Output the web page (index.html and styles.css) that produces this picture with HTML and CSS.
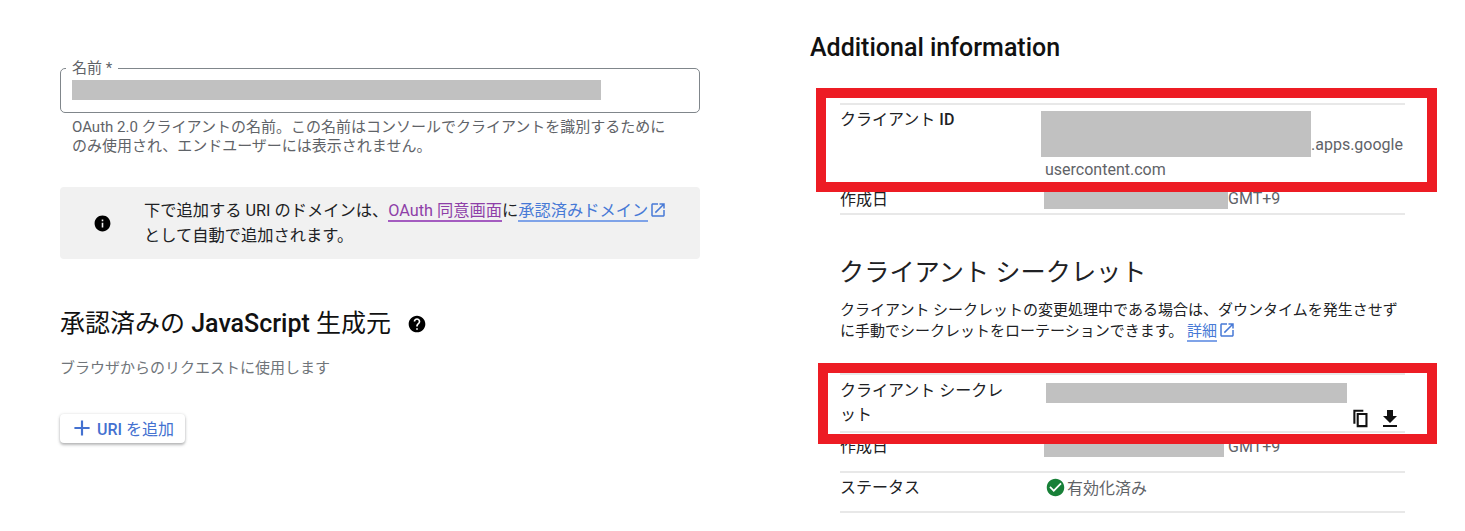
FILE: index.html
```html
<!DOCTYPE html>
<html lang="ja">
<head>
<meta charset="utf-8">
<title>OAuth クライアント</title>
<link rel="stylesheet" href="styles.css">
</head>
<body>
<main class="page">
  <section class="left">
    <div class="field">
      <span class="field-label">名前 *</span>
      <div class="redact field-value"></div>
    </div>
    <p class="helper">OAuth 2.0 クライアントの名前。この名前はコンソールでクライアントを識別するために<br>のみ使用され、エンドユーザーには表示されません。</p>
    <div class="notice">
      <svg class="notice-icon" viewBox="0 0 24 24"><path d="M12 2C6.48 2 2 6.48 2 12s4.48 10 10 10 10-4.48 10-10S17.52 2 12 2zm1 15h-2v-6h2v6zm0-8h-2V7h2v2z"/></svg>
      <p class="notice-text">下で追加する URI のドメインは、<a class="link visited">OAuth 同意画面</a>に<a class="link">承認済みドメイン</a><svg class="ext" viewBox="0 0 24 24"><path d="M19 19H5V5h7V3H5c-1.11 0-2 .9-2 2v14c0 1.1.89 2 2 2h14c1.1 0 2-.9 2-2v-7h-2v7zM14 3v2h3.59l-9.83 9.83 1.41 1.41L19 6.41V10h2V3h-7z"/></svg><br>として自動で追加されます。</p>
    </div>
    <h2 class="section-title">承認済みの <b>JavaScript</b> 生成元<svg class="help" viewBox="0 0 24 24"><path d="M12 2C6.48 2 2 6.48 2 12s4.48 10 10 10 10-4.48 10-10S17.52 2 12 2zm1 17h-2v-2h2v2zm2.07-7.75l-.9.92C13.45 12.9 13 13.5 13 15h-2v-.5c0-1.1.45-2.1 1.17-2.83l1.24-1.26c.37-.36.59-.86.59-1.41 0-1.1-.9-2-2-2s-2 .9-2 2H8c0-2.21 1.79-4 4-4s4 1.79 4 4c0 .88-.36 1.68-.93 2.25z"/></svg></h2>
    <p class="sub">ブラウザからのリクエストに使用します</p>
    <button class="add-btn" type="button"><svg class="plus" viewBox="0 0 24 24"><path d="M19 13h-6v6h-2v-6H5v-2h6V5h2v6h6v2z"/></svg><span><b>URI</b> を追加</span></button>
  </section>

  <section class="right">
    <h1 class="info-title">Additional information</h1>
    <div class="inner">
      <div class="row row-id">
        <div class="key">クライアント <b>ID</b></div>
        <div class="val id-val"><span class="redact id-block"></span>.apps.google<br>usercontent.com</div>
      </div>
      <div class="row row-date">
        <div class="key">作成日</div>
        <div class="val date-val"><span class="redact date-block"></span>GMT+9</div>
      </div>
      <h2 class="secret-title">クライアント シークレット</h2>
      <p class="secret-desc">クライアント シークレットの変更処理中である場合は、ダウンタイムを発生させず<br>に手動でシークレットをローテーションできます。 <a class="link">詳細</a><svg class="ext" viewBox="0 0 24 24"><path d="M19 19H5V5h7V3H5c-1.11 0-2 .9-2 2v14c0 1.1.89 2 2 2h14c1.1 0 2-.9 2-2v-7h-2v7zM14 3v2h3.59l-9.83 9.83 1.41 1.41L19 6.41V10h2V3h-7z"/></svg></p>
      <div class="row row-secret">
        <div class="key secret-key">クライアント シークレ<br>ット</div>
        <div class="val secret-val">
          <div class="redact secret-block"></div>
          <div class="actions">
            <svg class="act copy" viewBox="0 0 24 24"><path fill-rule="evenodd" d="M4 2h12v2.500H6.500V19H4zM8 6h13v17H8zM10.500 8.500v12h8v-12z"/></svg>
            <svg class="act down" viewBox="0 0 24 24"><path d="M19 9h-4V3H9v6H5l7 7 7-7zM5 18v2h14v-2H5z"/></svg>
          </div>
        </div>
      </div>
      <div class="row row-date2">
        <div class="key">作成日</div>
        <div class="val date-val"><span class="redact date-block2"></span>GMT+9</div>
      </div>
      <div class="row row-status">
        <div class="key">ステータス</div>
        <div class="val status"><svg class="check" viewBox="0 0 24 24"><path d="M12 2C6.48 2 2 6.48 2 12s4.48 10 10 10 10-4.48 10-10S17.52 2 12 2zm-2 15l-5-5 1.41-1.41L10 14.17l7.59-7.59L19 8l-9 9z"/></svg>有効化済み</div>
      </div>
    </div>
  </section>
  <div class="mark mark-id"></div>
  <div class="mark mark-secret"></div>
</main>
</body>
</html>
```

FILE: styles.css
```css
* { box-sizing: border-box; }
html, body { margin: 0; padding: 0; background: #fff; }
body {
  width: 1465px;
  height: 531px;
  overflow: hidden;
  font-family: Roboto, "Noto Sans CJK JP", sans-serif;
  color: #202124;
}
.page { position: relative; display: flex; height: 531px; }
.left { width: 810px; padding: 68px 0 0 60px; }
.right { width: 655px; }
p, h1, h2 { margin: 0; font-weight: 400; }

.redact { background: #c1c1c1; display: block; }

.field {
  position: relative;
  width: 640px;
  height: 45px;
  border: 1px solid #80868b;
  border-radius: 5px;
  padding: 11px 0 0 11px;
}
.field-label {
  position: absolute;
  left: 5px;
  top: -10px;
  padding: 0 6px;
  background: #fff;
  font-size: 15px;
  line-height: 18px;
  color: #5f6368;
}
.field-value { width: 529px; height: 20px; }

.helper {
  margin: 5px 0 0 12px;
  font-size: 15px;
  line-height: 19px;
  color: #5f6368;
  white-space: nowrap;
}
.notice {
  display: flex;
  align-items: center;
  width: 640px;
  height: 72px;
  margin-top: 31px;
  padding-left: 33px;
  background: #f1f1f1;
  border-radius: 4px;
}
.notice-icon { width: 19px; height: 19px; flex: none; }
.notice-text {
  margin-left: 32px;
  font-size: 16.25px;
  line-height: 25px;
  white-space: nowrap;
}
.link { color: #4779d6; border-bottom: 2px solid #7fa3e8; }
.link.visited { color: #8e3fa8; border-color: #a45cc0; }
.ext { width: 18px; height: 18px; fill: #4779d6; vertical-align: -3px; margin-left: 1px; }

.section-title {
  margin-top: 47px;
  font-size: 25px;
  line-height: 36px;
  color: #111;
  white-space: nowrap;
}
.section-title b { font-weight: 500; }
.help { width: 20px; height: 20px; margin-left: 16px; vertical-align: -2px; fill: #000; }
.sub { margin-top: 16px; font-size: 15px; line-height: 20px; color: #70757a; }
.add-btn {
  display: flex;
  align-items: center;
  gap: 2px;
  width: 125px;
  height: 29px;
  margin-top: 36px;
  padding: 0 0 1px 9px;
  border: 0;
  border-radius: 4px;
  background: #fff;
  box-shadow: 0 2px 3px rgba(60,64,67,.35), 0 0 3px rgba(60,64,67,.15);
  font: inherit;
  font-size: 16px;
  color: #4471d0;
}
.add-btn b { font-weight: 500; }
.plus { width: 26px; height: 26px; fill: #4471d0; flex: none; }

.info-title {
  margin-top: 32px;
  font-size: 25px;
  font-weight: 500;
  line-height: 32px;
  color: #111;
}
.inner { width: 565px; margin: 39px 0 0 30px; }

.row { display: grid; grid-template-columns: 200px 1fr; border-top: 2px solid #e8e8e8; font-size: 16px; }
.key { line-height: 25px; }
.key b { font-weight: 500; }
.val { color: #5f6368; font-size: 16px; }

.row-id { height: 82px; padding-top: 2px; }
.id-val { line-height: 25px; padding-left: 5px; }
.id-block { display: inline-block; width: 270px; height: 46px; margin: 4px 0 0 -4px; vertical-align: -7px; }

.row-date { height: 30px; border-top: 0; border-bottom: 2px solid #e8e8e8; align-items: center; }
.date-val { display: flex; align-items: center; line-height: 20px; }
.date-block { width: 184px; height: 20px; margin-left: 4px; }
.date-block2 { width: 180px; height: 20px; margin: 0 4px 0 4px; }

.secret-title { margin: 40px 0 0 -1px; font-size: 25.2px; line-height: 36px; white-space: nowrap; }
.secret-desc {
  margin-top: 9px;
  font-size: 15px;
  line-height: 21px;
  white-space: nowrap;
}

.row-secret { height: 58px; margin-top: 31px; padding-top: 4px; }
.secret-key { line-height: 24px; }
.secret-val { display: flex; flex-direction: column; }
.secret-block { width: 301px; height: 20px; margin: 4px 0 0 6px; }
.actions { display: flex; justify-content: flex-end; align-items: center; gap: 8px; margin-top: 4px; padding-right: 3px; }
.act { fill: #111; }
.copy { width: 20px; height: 20px; margin-top: -3px; }
.down { width: 24px; height: 24px; }

.row-date2 { height: 40px; align-items: center; padding-bottom: 11px; }
.row-status { height: 42px; border-bottom: 2px solid #e8e8e8; align-items: center; padding-bottom: 10px; }
.status { display: flex; align-items: center; gap: 1px; margin-left: 5px; }
.check { width: 21px; height: 21px; fill: #188038; }

.mark { position: absolute; border: 10px solid #ed1c24; pointer-events: none; }
.mark-id { left: 816px; top: 88px; width: 621px; height: 104px; }
.mark-secret { left: 818px; top: 363px; width: 619px; height: 81px; }
```
